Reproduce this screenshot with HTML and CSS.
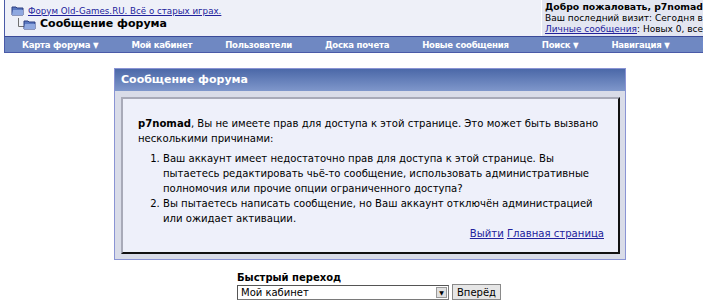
FILE: index.html
```html
<!DOCTYPE html>
<html lang="ru">
<head>
    <meta charset="UTF-8">
    <title>Сообщение форума</title>
    <link rel="stylesheet" href="styles.css">
</head>
<body>
<div class="page">
    <div class="header">
        <div class="crumbs">
            <div class="crumb-top">
                <svg class="folder" width="13" height="11" viewBox="0 0 13 11"><path d="M1 2h4l1 1h6v7H1z" fill="#5a78c0" stroke="#2a3c80" stroke-width="1"/><path d="M2 5h10v5H1z" fill="#8fa8e0"/></svg>
                <a href="#">Форум Old-Games.RU. Всё о старых играх.</a>
            </div>
            <div class="crumb-cur">
                <svg class="tree" width="22" height="12" viewBox="0 0 22 12"><path d="M3.5 0v8.5H9" fill="none" stroke="#707070" stroke-width="1"/><path d="M9 3h4l1 1h6v7H9z" fill="#5a78c0" stroke="#2a3c80" stroke-width="1"/><path d="M10 6h10v5H9z" fill="#8fa8e0"/></svg>
                <strong>Сообщение форума</strong>
            </div>
        </div>
        <div class="userbox">
            <strong>Добро пожаловать, p7nomad</strong>
            <div>Ваш последний визит: Сегодня в 10:15</div>
            <div><a href="#">Личные сообщения</a>: Новых 0, всего 3.</div>
        </div>
    </div>
    <div class="navbar">
        <span>Карта форума <i class="arrow">&#9660;</i></span>
        <span>Мой кабинет</span>
        <span>Пользователи</span>
        <span>Доска почета</span>
        <span>Новые сообщения</span>
        <span>Поиск <i class="arrow">&#9660;</i></span>
        <span>Навигация <i class="arrow">&#9660;</i></span>
        <span>Выход</span>
    </div>

    <div class="msgbox">
        <div class="msgbox-title">Сообщение форума</div>
        <div class="msgbox-body">
            <div class="panel">
                <p class="reason"><strong>p7nomad</strong>, Вы не имеете прав для доступа к этой странице. Это может быть вызвано несколькими причинами:</p>
                <ol class="reasons">
                    <li>Ваш аккаунт имеет недостаточно прав для доступа к этой странице. Вы пытаетесь редактировать чьё-то сообщение, использовать административные полномочия или прочие опции ограниченного доступа?</li>
                    <li>Вы пытаетесь написать сообщение, но Ваш аккаунт отключён администрацией или ожидает активации.</li>
                </ol>
                <div class="links"><a href="#">Выйти</a> <a href="#">Главная страница</a></div>
            </div>
        </div>
    </div>

    <div class="jump">
        <div class="jump-label">Быстрый переход</div>
        <div class="jump-row">
            <div class="select">
                <span>Мой кабинет</span>
                <span class="select-btn">&#9660;</span>
            </div>
            <button class="go">Вперёд</button>
        </div>
    </div>
</div>
</body>
</html>
```

FILE: styles.css
```css
html, body {
    margin: 0;
    padding: 0;
    background-color: #fff;
    overflow: hidden;
}
body {
    font-family: "DejaVu Sans", Verdana, sans-serif;
    font-size: 10.1px;
    color: #000;
}
a {
    color: #22229c;
}
.page {
    width: 732px;
    margin-left: 4px;
}
.header {
    display: flex;
    height: 36px;
    background-color: #eef0f8;
    border-left: 1px solid #4a5aa8;
    border-bottom: 1px solid #3a4a98;
}
.crumbs {
    flex: 1;
    padding: 4px 0 0 6px;
}
.crumb-top {
    display: flex;
    align-items: center;
    gap: 4px;
    font-size: 8.7px;
    height: 13px;
}
.crumb-top .folder {
    flex: none;
}
.crumb-cur {
    display: flex;
    align-items: center;
    gap: 3px;
    font-size: 11px;
}
.crumb-cur .tree {
    margin-left: 4px;
}
.userbox {
    width: 191px;
    padding: 1px 0 0 3px;
    background-color: #e3e6f1;
    border-left: 1px solid #fff;
    font-size: 9px;
    line-height: 11px;
    white-space: nowrap;
    overflow: hidden;
}
.userbox strong {
    font-size: 9.3px;
}
.navbar {
    display: flex;
    gap: 33px;
    height: 15px;
    padding-left: 17px;
    align-items: center;
    background-color: #6f88c2;
    border-left: 1px solid #4a5aa8;
    border-bottom: 1px solid #4a5aa8;
    font-family: "DejaVu Sans Condensed", "Liberation Sans", sans-serif;
    font-size: 9.5px;
    font-weight: bold;
    letter-spacing: -0.25px;
    color: #fff;
    white-space: nowrap;
}
.arrow {
    font-style: normal;
    font-size: 8px;
}

.msgbox {
    width: 510px;
    margin: 15px auto 0;
    border: 1px solid #8a94d4;
}
.msgbox-title {
    height: 22px;
    line-height: 22px;
    padding-left: 6px;
    background: linear-gradient(#4b68a8, #7f97cb);
    color: #fff;
    font-size: 11px;
    font-weight: bold;
}
.msgbox-body {
    padding: 6px 5px 5px 6px;
    background-color: #d9dce8;
}
.panel {
    padding: 17px 8px 11px 15px;
    background-color: #eef0fa;
    border-top: 2px solid #a8aab8;
    border-left: 2px solid #a8aab8;
    border-right: 2px solid #111;
    border-bottom: 2px solid #111;
    line-height: 15px;
}
.reason {
    margin: 0 0 5px;
}
.reasons {
    margin: 0;
    padding-left: 25px;
}
.links {
    margin-top: 0;
    padding-right: 6px;
    text-align: right;
}

.jump {
    width: 270px;
    margin: 12px 0 0 233px;
}
.jump-label {
    font-size: 10px;
    font-weight: bold;
    line-height: 12px;
}
.jump-row {
    display: flex;
    align-items: center;
    gap: 3px;
}
.select {
    display: flex;
    justify-content: space-between;
    align-items: center;
    width: 207px;
    height: 13px;
    padding-left: 3px;
    background-color: #fff;
    border: 1px solid #7a7a7a;
    border-top-color: #555;
    border-left-color: #555;
    font-size: 10px;
}
.select-btn {
    width: 11px;
    height: 11px;
    margin-right: 1px;
    background-color: #e0e0e0;
    border: 1px solid #999;
    box-sizing: border-box;
    font-size: 6px;
    line-height: 9px;
    text-align: center;
}
.go {
    height: 16px;
    padding: 0 4px;
    background-color: #e6e6e6;
    border: 1px solid #8a8a8a;
    font-family: "DejaVu Sans", Verdana, sans-serif;
    font-size: 10px;
}
```
